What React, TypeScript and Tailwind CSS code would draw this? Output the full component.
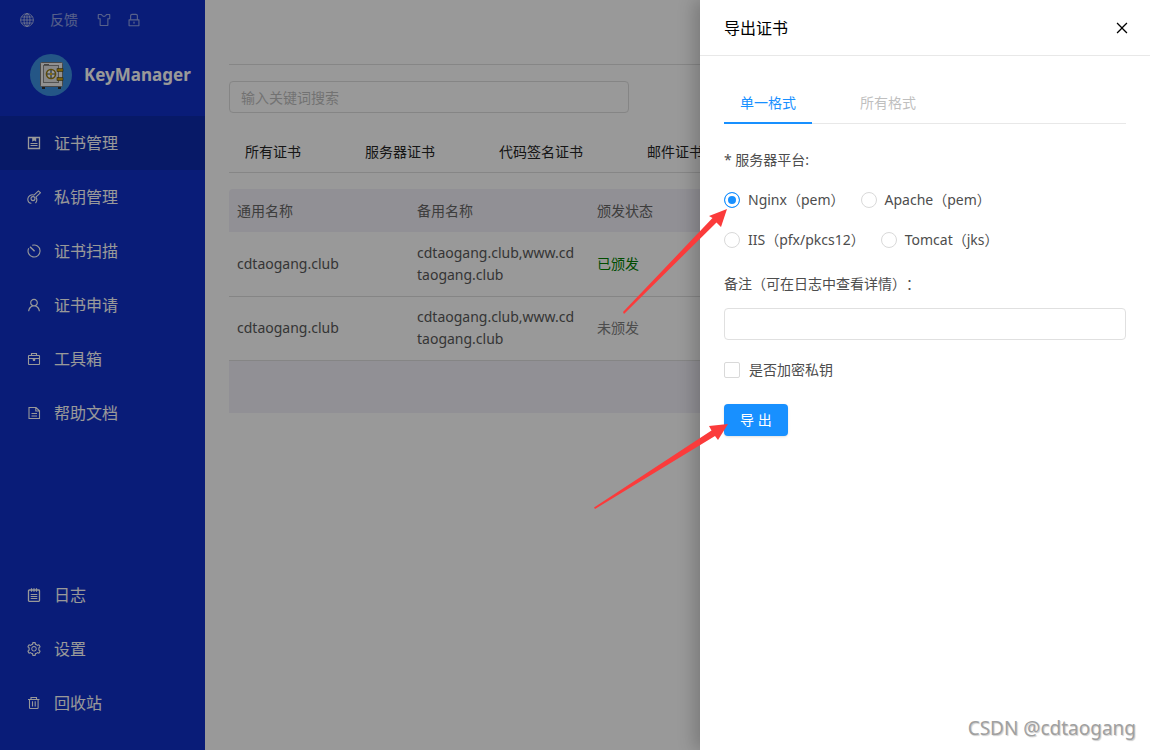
import type { ReactNode } from "react"
import { AiOutlineClose, AiOutlineLock, AiOutlineSetting, AiOutlineSkin, AiOutlineUser } from "react-icons/ai"

type MenuItem = { label: string; icon: ReactNode; active?: boolean }

const LineIcon = ({ children }: { children: ReactNode }) => (
    <svg viewBox="0 0 14 14" className="size-[14px]" fill="none" stroke="currentColor" strokeWidth="1.1" aria-hidden="true">
        {children}
    </svg>
)

const mainMenu: MenuItem[] = [
    {
        label: "证书管理",
        active: true,
        icon: (
            <LineIcon>
                <path d="M1.500 1.500h11v11h-11z" strokeWidth="1.300" />
                <path d="M5.200 2h4v3.800L7.200 4.600l-2 1.200z" fill="currentColor" stroke="none" />
                <path d="M3.500 7.500h7M3.500 9.500h7" strokeWidth="1.200" />
            </LineIcon>
        ),
    },
    {
        label: "私钥管理",
        icon: (
            <LineIcon>
                <path d="M7 5.200 11.400.900l2 1.900-4.600 4.400" />
                <path d="M8.800 7.200c1.400 1.600 1 4.300-.300 6M7 5.200C4.300 4 1 6 .800 9c0 2.400 1.600 4.200 3.600 4.200" />
                <circle cx="6" cy="8.600" r="2" />
            </LineIcon>
        ),
    },
    {
        label: "证书扫描",
        icon: (
            <LineIcon>
                <path d="M5.200 1.300A6 6 0 1 1 1.700 4.300" />
                <path d="M3 2.800 7.600 7.200" strokeWidth="1.400" />
            </LineIcon>
        ),
    },
    { label: "证书申请", icon: <AiOutlineUser className="size-4" /> },
    {
        label: "工具箱",
        icon: (
            <LineIcon>
                <rect x="1.500" y="3.500" width="11" height="9" rx="0.500" />
                <path d="M4.500 3.200V1.500h5v1.700M1.500 6.500h11" />
                <path d="M5.500 6.500h3L8 9H6z" fill="currentColor" stroke="none" />
            </LineIcon>
        ),
    },
    {
        label: "帮助文档",
        icon: (
            <LineIcon>
                <path d="M2 1.500h7l3.500 3.300v7.700H2zM8.800 1.500v3.500h3.500M4.500 7.500h5.500M4.500 10h5.500" />
            </LineIcon>
        ),
    },
]

const bottomMenu: MenuItem[] = [
    {
        label: "日志",
        icon: (
            <LineIcon>
                <rect x="1.500" y="2" width="11" height="11.300" rx="0.800" strokeWidth="1.300" />
                <path d="M4.500.300v3.400M7 .300v3.400M9.500.300v3.400" strokeWidth="1.200" />
                <path d="M3.700 6.500h6.600M3.700 8.500h6.600M3.700 10.500h6.600" />
            </LineIcon>
        ),
    },
    { label: "设置", icon: <AiOutlineSetting className="size-4" /> },
    {
        label: "回收站",
        icon: (
            <LineIcon>
                <path d="M1 3.500h11.500M4 3.200V1.500h5.500v1.700M2.500 3.500v8.200q0 .800.800.800h7q.800 0 .800-.800V3.500M5.500 5.200v5.200M8.200 5.200v5.200" />
            </LineIcon>
        ),
    },
]

const certTabs = ["所有证书", "服务器证书", "代码签名证书", "邮件证书"]

const certs = [
    { name: "cdtaogang.club", alt: "cdtaogang.club,www.cdtaogang.club", status: "已颁发", statusClass: "text-[#008000]" },
    { name: "cdtaogang.club", alt: "cdtaogang.club,www.cdtaogang.club", status: "未颁发", statusClass: "text-[#808080]" },
]

const platforms = ["Nginx（pem）", "Apache（pem）", "IIS（pfx/pkcs12）", "Tomcat（jks）"]

const Menu = ({ items }: { items: MenuItem[] }) => (
    <nav>
        {items.map((item) => (
            <a
                key={item.label}
                href="#"
                className={`flex h-[54px] items-center gap-3 pl-[26px] text-base text-white ${item.active ? "bg-[#0d2bac]" : ""}`}
            >
                <span className="flex w-4 justify-center">{item.icon}</span>
                {item.label}
            </a>
        ))}
    </nav>
)

const SafeLogo = () => (
    <svg viewBox="0 0 42 42" className="size-[42px]" aria-hidden="true">
        <circle cx="21" cy="21" r="21" fill="#3d8fe0" />
        <path d="M12 32h3v3h-3zM28 32h3v3h-3z" fill="#333" />
        <rect x="10.500" y="8.500" width="22" height="24" rx="1" fill="#f2f2f2" stroke="#7a7a7a" />
        <rect x="13.500" y="11.500" width="15" height="17" fill="#e4e4e4" stroke="#8a8a8a" />
        <path d="M14 10.500h5" stroke="#777" />
        <circle cx="21" cy="20" r="4.500" fill="#fff" stroke="#9b7d12" strokeWidth="1.600" />
        <path d="M21 16v8M17 20h8" stroke="#35506d" strokeWidth="1.200" />
        <circle cx="21" cy="20" r="1.300" fill="#e0b51c" />
        <path d="M27 14.500h6v3h-6zM27 23.500h6v3h-6z" fill="#d1a30f" stroke="#44401f" strokeWidth="0.600" />
    </svg>
)

const Sidebar = () => (
    <aside className="flex w-[205px] shrink-0 flex-col bg-[#0f30c8] pb-5">
        <div className="flex h-10 items-center gap-4 pl-5 text-sm text-white/55">
            <button type="button" aria-label="语言">
                <svg viewBox="0 0 14 14" className="size-[14px]" fill="none" stroke="currentColor" aria-hidden="true">
                    <circle cx="7" cy="7" r="6.400" />
                    <ellipse cx="7" cy="7" rx="3" ry="6.400" />
                    <path d="M7 .600v12.800M.600 7h12.800M1.500 4h11M1.500 10h11" />
                </svg>
            </button>
            <a href="#">反馈</a>
            <div className="flex items-center gap-[14px] pl-[2px]">
                <button type="button" aria-label="皮肤">
                    <AiOutlineSkin className="size-4" />
                </button>
                <button type="button" aria-label="锁定">
                    <AiOutlineLock className="size-4" />
                </button>
            </div>
        </div>
        <div className="mb-5 flex items-center gap-3 pt-[14px] pl-[30px]">
            <SafeLogo />
            <h1 className="text-[17px] font-bold text-white">KeyManager</h1>
        </div>
        <Menu items={mainMenu} />
        <div className="mt-auto">
            <Menu items={bottomMenu} />
        </div>
    </aside>
)

const CertList = () => (
    <main className="min-w-0 flex-1 overflow-hidden px-6 text-sm text-[#595959]">
        <div className="h-[65px] border-b border-[#e0e0e0]" />
        <input
            type="text"
            aria-label="搜索"
            placeholder="输入关键词搜索"
            className="mt-4 block h-8 w-[400px] rounded border border-[#dedede] bg-transparent px-[11px] placeholder:text-[#bfbfbf]"
        />
        <div className="flex h-[60px] gap-8 border-b border-[#e0e0e0] pt-[18px] text-[#262626]">
            {certTabs.map((tab) => (
                <button key={tab} type="button" className="h-[42px] shrink-0 px-4">
                    {tab}
                </button>
            ))}
        </div>
        <table className="mt-4 w-full table-fixed">
            <thead>
                <tr className="h-[43px] bg-[#f2f0f8] text-left text-[#666]">
                    <th className="w-[180px] rounded-tl px-2 font-normal">通用名称</th>
                    <th className="w-[180px] px-2 font-normal">备用名称</th>
                    <th className="px-2 font-normal">颁发状态</th>
                </tr>
            </thead>
            <tbody>
                {certs.map((cert, i) => (
                    <tr key={i} className="h-16 border-b border-[#dedede] leading-[22px]">
                        <td className="px-2">{cert.name}</td>
                        <td className="pr-3 pl-2 break-all">{cert.alt}</td>
                        <td className={`px-2 ${cert.statusClass}`}>{cert.status}</td>
                    </tr>
                ))}
            </tbody>
        </table>
        <div className="h-[52px] bg-[#f2f0f8]" />
    </main>
)

const ExportDrawer = () => (
    <div
        role="dialog"
        aria-label="导出证书"
        className="absolute inset-y-0 right-0 w-[450px] bg-white text-sm text-[#4d4d4d] shadow-[-6px_0_16px_rgba(0,0,0,0.2)]"
    >
        <header className="flex h-14 items-center justify-between border-b border-[#e8e8e8] pr-5 pl-6 text-base text-black">
            <h2>导出证书</h2>
            <button type="button" aria-label="关闭">
                <AiOutlineClose className="size-4" />
            </button>
        </header>
        <form className="px-6 pt-[26px]">
            <div className="flex gap-8 border-b border-[#e8e8e8]">
                <button type="button" className="-mb-px h-[42px] border-b-2 border-[#1890ff] px-4 pt-0.5 text-[#1890ff]">
                    单一格式
                </button>
                <button type="button" className="px-4 text-[#bfbfbf]">
                    所有格式
                </button>
            </div>
            <div role="radiogroup" aria-labelledby="platform-title" className="pt-6">
                <p id="platform-title" className="mb-2 leading-6">
                    * 服务器平台:
                </p>
                <div className="flex flex-wrap gap-x-4">
                    {platforms.map((platform, i) => (
                        <label key={platform} className="flex h-10 items-center gap-2">
                            <input
                                type="radio"
                                name="platform"
                                defaultChecked={i === 0}
                                className="size-4 appearance-none rounded-full border border-[#d9d9d9] checked:border-[#1890ff] checked:bg-[#1890ff] checked:shadow-[inset_0_0_0_3px_#fff]"
                            />
                            {platform}
                        </label>
                    ))}
                </div>
            </div>
            <label htmlFor="remark" className="mt-3 block leading-6 [text-spacing-trim:space-all]">
                备注（可在日志中查看详情）：
            </label>
            <input id="remark" type="text" className="mt-3 block h-8 w-full rounded border border-[#e0e0e0] px-[11px]" />
            <label className="mt-5 flex h-5 items-center gap-[9px]">
                <input type="checkbox" className="size-4 appearance-none rounded-xs border border-[#d9d9d9] checked:bg-[#1890ff]" />
                是否加密私钥
            </label>
            <button type="button" className="mt-6 h-8 rounded bg-[#1890ff] px-4 text-white shadow-sm">
                导 出
            </button>
        </form>
        <svg className="pointer-events-none absolute top-0 left-0 overflow-visible" width="1" height="1" fill="#fb3b3b" aria-hidden="true">
            <path d="M27 209 9 216l3.500 2L-77 312l1 2L16.500 222.500 21 227z" />
            <path d="M28 424 9 426l2.500 4.500L-106 507.500l1 1.500L15 436l3 4z" />
        </svg>
        <p className="absolute right-[14px] bottom-2 text-[19px] text-[#a0a0a0] [text-shadow:1px_1px_1px_rgba(0,0,0,0.2)]">
            CSDN @cdtaogang
        </p>
    </div>
)

const App = () => {
    return (
        <div className="relative flex min-h-screen overflow-hidden bg-white font-['Noto_Sans','Noto_Sans_CJK_SC',sans-serif]">
            <Sidebar />
            <CertList />
            <div className="absolute inset-0 bg-black/40" />
            <ExportDrawer />
        </div>
    )
}

export default App
